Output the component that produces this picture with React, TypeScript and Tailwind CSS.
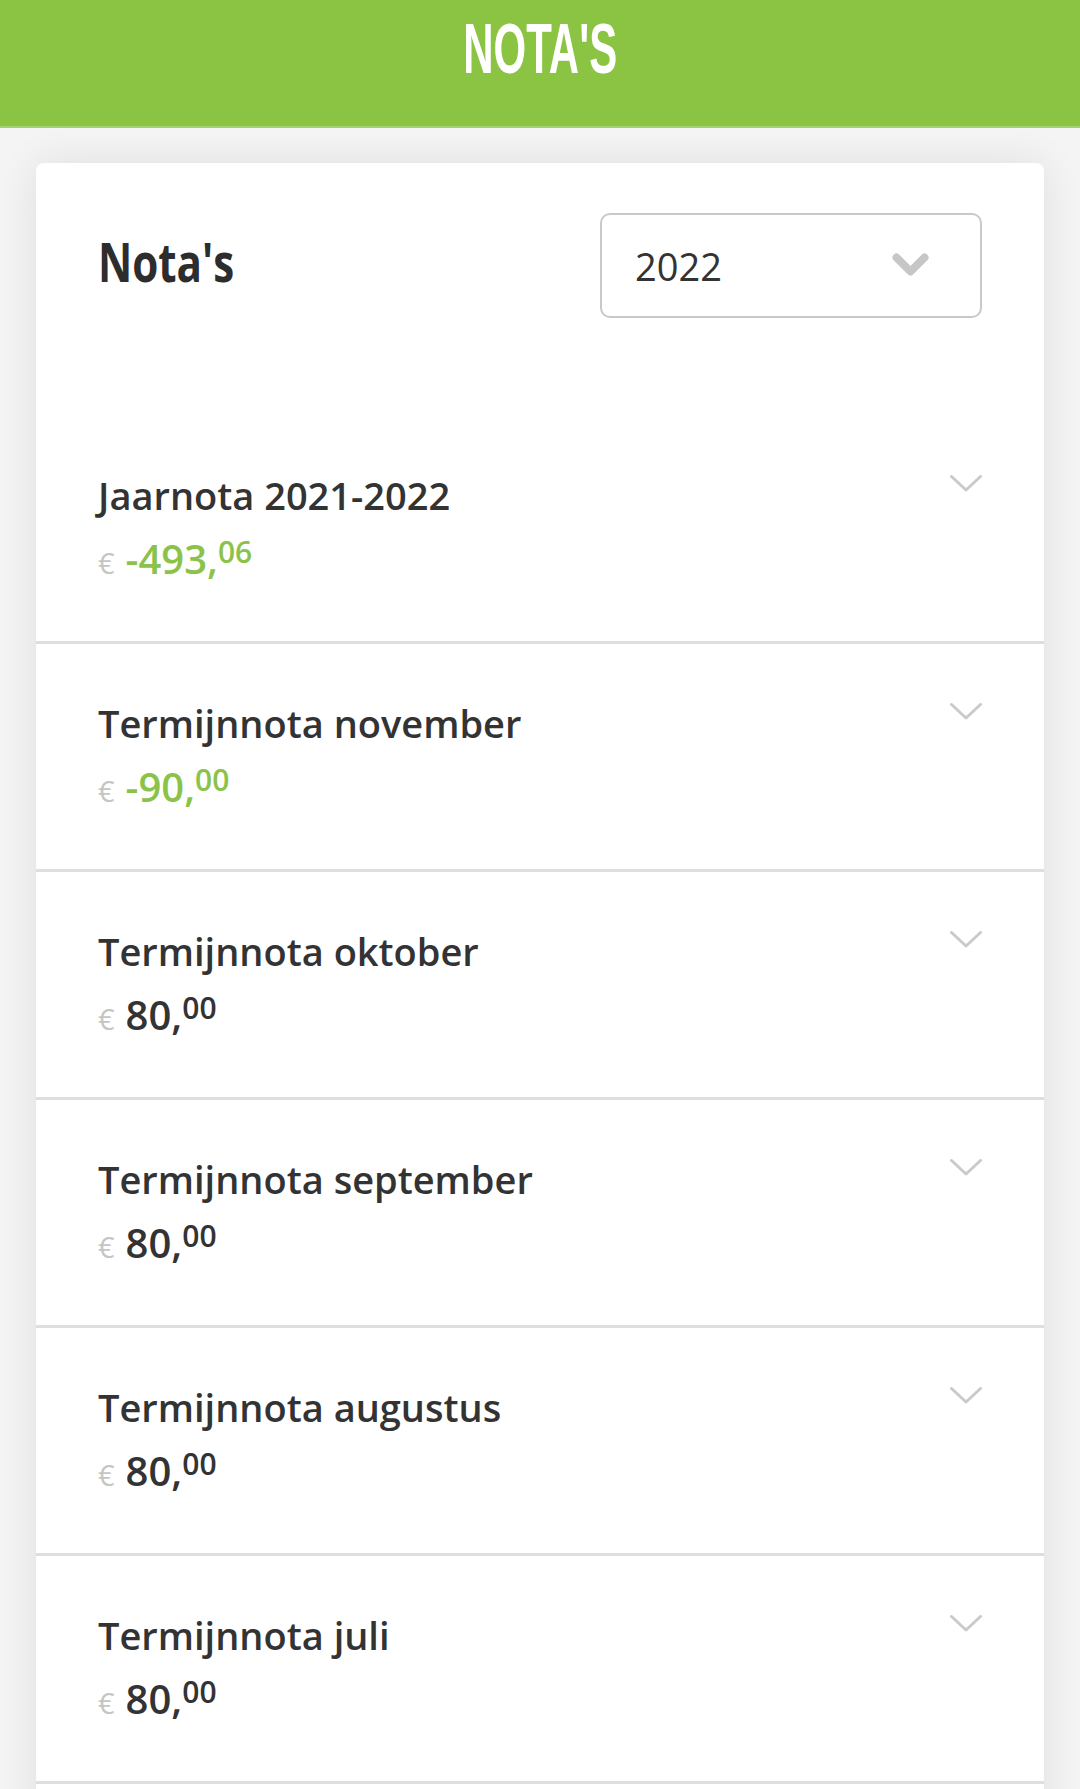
// Nota's overview: green page header, then one white card with a year picker
// and the list of invoices (jaarnota + termijnnota's), newest first.
type Nota = {
  title: string;
  euros: string;
  cents: string;
  credit?: boolean;
};

const notas: Nota[] = [
  { title: 'Jaarnota 2021-2022', euros: '-493', cents: '06', credit: true },
  { title: 'Termijnnota november', euros: '-90', cents: '00', credit: true },
  { title: 'Termijnnota oktober', euros: '80', cents: '00' },
  { title: 'Termijnnota september', euros: '80', cents: '00' },
  { title: 'Termijnnota augustus', euros: '80', cents: '00' },
  { title: 'Termijnnota juli', euros: '80', cents: '00' },
  { title: 'Termijnnota juni', euros: '80', cents: '00' },
];

function ChevronThin() {
  return (
    <svg width="32" height="17" viewBox="0 0 32 17" fill="none" className="mt-[4px] shrink-0">
      <path d="M1.5 1.5 L16 15 L30.5 1.5" stroke="#cacaca" strokeWidth="3" strokeLinecap="round" strokeLinejoin="round" />
    </svg>
  );
}

function ChevronBold() {
  return (
    <svg width="37" height="25" viewBox="0 0 37 25" fill="none" className="shrink-0">
      <path d="M4.5 4.5 L18.5 18.5 L32.5 4.5" stroke="#c6c6c6" strokeWidth="8" strokeLinecap="round" strokeLinejoin="round" />
    </svg>
  );
}

function NotaRow({ nota }: { nota: Nota }) {
  return (
    <div className="flex items-start justify-between border-b-[3px] border-[#dedede] pb-[54px] pl-[62px] pr-[62px] pt-[55px]">
      <div>
        <p className="text-[38px] font-semibold leading-[48px] text-[#333]">{nota.title}</p>
        <p className="mt-4 text-[40px] font-semibold leading-[48px]">
          <span className="mr-[11px] text-[29px] font-normal text-[#c5c5c5]">€</span>
          <span className={nota.credit ? 'text-[#8bc34a]' : 'text-[#333]'}>
            {nota.euros},<span className="align-[11px] text-[30px] leading-none">{nota.cents}</span>
          </span>
        </p>
      </div>
      <ChevronThin />
    </div>
  );
}

export default function App() {
  return (
    <div className="min-h-screen bg-[#f4f4f4] font-['Open_Sans',sans-serif]">
      <header className="flex h-[128px] justify-center border-b-2 border-[#a6d16f] bg-[#8bc343] pt-[14px]">
        <span className="inline-block scale-x-[0.6] font-['Liberation_Sans',sans-serif] text-[70px] font-bold leading-[70px] text-white">
          NOTA'S
        </span>
      </header>

      <main className="mx-[36px] mt-[35px] rounded-lg bg-white shadow-[0_0_40px_rgba(0,0,0,0.09)]">
        <div className="flex items-center justify-between pb-[98px] pl-[62px] pr-[62px] pt-[50px]">
          <h1 className="mb-[10px] origin-left scale-x-[0.78] text-[54px] font-bold leading-none text-[#2d2d2d]">
            Nota's
          </h1>
          <div className="flex h-[105px] w-[382px] items-center justify-between rounded-[10px] border-2 border-[#c9c9c9] pl-[33px] pr-[51px]">
            <span className="text-[38px] leading-none text-[#333]">2022</span>
            <ChevronBold />
          </div>
        </div>

        {notas.map((nota) => (
          <NotaRow key={nota.title} nota={nota} />
        ))}
      </main>
    </div>
  );
}
